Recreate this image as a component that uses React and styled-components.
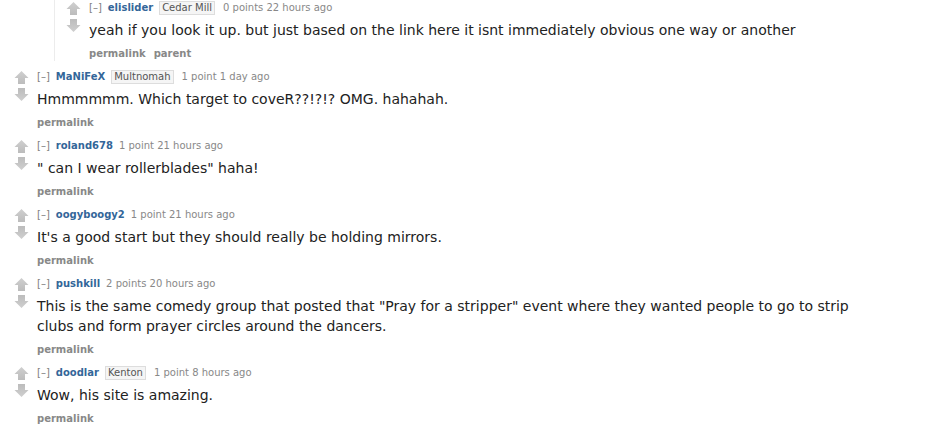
import React from "react";
import styled, { createGlobalStyle } from "styled-components";

const Global = createGlobalStyle`
  html, body { margin: 0; padding: 0; background: #ffffff; }
  body { font-family: Verdana, "DejaVu Sans", sans-serif; }
`;

const Page = styled.div`
  width: 945px;
  height: 430px;
  overflow: hidden;
  background: #fff;
  padding-left: 14px;
  box-sizing: border-box;
`;

const ChildList = styled.div`
  margin-left: 40px;
  border-left: 1px solid #ececec;
  padding-left: 11px;
  padding-top: 1px;
  margin-bottom: 9px;
`;

const CommentRow = styled.div`
  display: flex;
  align-items: flex-start;
  margin-bottom: ${(p) => (p.$last ? "0" : "9px")};
`;

const Midcol = styled.div`
  width: 15px;
  flex: none;
  display: flex;
  flex-direction: column;
  align-items: center;
  padding-top: 1px;
  gap: 4px;
`;

const Entry = styled.div`
  margin-left: 8px;
  flex: 1;
`;

const Tagline = styled.div`
  font-size: 10px;
  line-height: 14px;
  color: #888;
  white-space: nowrap;
`;

const Expand = styled.span`
  color: #808080;
  margin-right: 6px;
`;

const Author = styled.span`
  color: #369;
  font-weight: bold;
  margin-right: 6px;
`;

const Flair = styled.span`
  display: inline-block;
  color: #545454;
  background: #f5f5f5;
  border: 1px solid #dddddd;
  padding: 0 2px;
  line-height: 12px;
  margin-right: 8px;
`;

const Body = styled.div`
  margin-top: 5px;
  font-size: 14px;
  line-height: 20px;
  color: #222;
  max-width: 840px;
`;

const Buttons = styled.div`
  margin-top: 7px;
  display: flex;
  gap: 8px;
  font-size: 10px;
  line-height: 14px;
  font-weight: bold;
  color: #888;
`;

const Arrow = ({ down }) => (
  <svg width="15" height="13" viewBox="0 0 15 13" aria-hidden="true">
    <defs>
      <linearGradient id={down ? "gd" : "gu"} x1="0" y1="0" x2="0" y2="1">
        <stop offset="0" stopColor="#cfcfcf" />
        <stop offset="1" stopColor="#bcbcbc" />
      </linearGradient>
    </defs>
    <polygon
      transform={down ? "rotate(180 7.5 6.5)" : undefined}
      points="7.5,0 14.5,7 11,7 11,13 4,13 4,7 0.5,7"
      fill={`url(#${down ? "gd" : "gu"})`}
    />
  </svg>
);

const Comment = ({ c, last }) => (
  <CommentRow $last={last}>
    <Midcol>
      <Arrow />
      <Arrow down />
    </Midcol>
    <Entry>
      <Tagline>
        <Expand>[–]</Expand>
        <Author>{c.author}</Author>
        {c.flair && <Flair>{c.flair}</Flair>}
        {c.score} {c.time}
      </Tagline>
      <Body>{c.body}</Body>
      <Buttons>
        <span>permalink</span>
        {c.parent && <span>parent</span>}
      </Buttons>
    </Entry>
  </CommentRow>
);

const nested = {
  author: "elislider",
  flair: "Cedar Mill",
  score: "0 points",
  time: "22 hours ago",
  body: "yeah if you look it up. but just based on the link here it isnt immediately obvious one way or another",
  parent: true,
};

const comments = [
  { author: "MaNiFeX", flair: "Multnomah", score: "1 point", time: "1 day ago", body: "Hmmmmmm. Which target to coveR??!?!? OMG. hahahah." },
  { author: "roland678", score: "1 point", time: "21 hours ago", body: "\" can I wear rollerblades\" haha!" },
  { author: "oogyboogy2", score: "1 point", time: "21 hours ago", body: "It's a good start but they should really be holding mirrors." },
  { author: "pushkill", score: "2 points", time: "20 hours ago", body: "This is the same comedy group that posted that \"Pray for a stripper\" event where they wanted people to go to strip clubs and form prayer circles around the dancers." },
  { author: "doodlar", flair: "Kenton", score: "1 point", time: "8 hours ago", body: "Wow, his site is amazing." },
];

export default function App() {
  return (
    <>
      <Global />
      <Page>
        <ChildList>
          <Comment c={nested} last />
        </ChildList>
        {comments.map((c, i) => (
          <Comment key={i} c={c} />
        ))}
      </Page>
    </>
  );
}
